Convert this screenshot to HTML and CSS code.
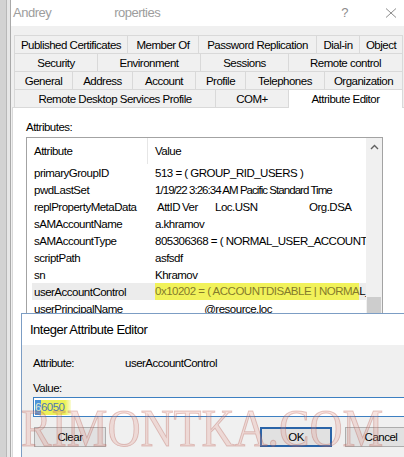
FILE: index.html
```html
<!DOCTYPE html>
<html>
<head>
<meta charset="utf-8">
<link rel="stylesheet" href="styles.css">
</head>
<body>
<div class="screen">
  <div class="strip"></div>
  <div class="window">
    <div class="titlebar">
      <span class="title">Andrey<span class="redact"> Khramov P</span>roperties</span>
      <span class="help">?</span>
      <span class="close"><svg width="12" height="10" viewBox="0 0 12 10"><path d="M1 0.5L11 9.5M11 0.5L1 9.5" stroke="#8c8c8c" stroke-width="1" fill="none"/></svg></span>
    </div>
    <div class="tabs">
      <div class="tabrow r1">
        <div class="tab">Published Certificates</div>
        <div class="tab">Member Of</div>
        <div class="tab">Password Replication</div>
        <div class="tab">Dial-in</div>
        <div class="tab">Object</div>
      </div>
      <div class="tabrow r2">
        <div class="tab">Security</div>
        <div class="tab">Environment</div>
        <div class="tab">Sessions</div>
        <div class="tab">Remote control</div>
      </div>
      <div class="tabrow r3">
        <div class="tab">General</div>
        <div class="tab">Address</div>
        <div class="tab">Account</div>
        <div class="tab">Profile</div>
        <div class="tab">Telephones</div>
        <div class="tab">Organization</div>
      </div>
      <div class="tabrow r4">
        <div class="tab">Remote Desktop Services Profile</div>
        <div class="tab">COM+</div>
        <div class="tab active">Attribute Editor</div>
      </div>
    </div>
    <div class="panel">
      <div class="label">Attributes:</div>
      <div class="listbox">
        <div class="list">
          <div class="head"><span class="hc1">Attribute</span><span class="hc2">Value</span></div>
          <div class="row"><span class="c1">primaryGroupID</span><span class="c2">513 = ( GROUP_RID_USERS )</span></div>
          <div class="row"><span class="c1">pwdLastSet</span><span class="c2 num">1/19/22 3:26:34 AM Pacific Standard Time</span></div>
          <div class="row"><span class="c1">replPropertyMetaData</span><span class="c2 meta"><span>AttID</span><span>Ver</span><span>Loc.USN</span><span>Org.DSA</span></span></div>
          <div class="row"><span class="c1">sAMAccountName</span><span class="c2">a.khramov</span></div>
          <div class="row"><span class="c1">sAMAccountType</span><span class="c2">805306368 = ( NORMAL_USER_ACCOUNT )</span></div>
          <div class="row"><span class="c1">scriptPath</span><span class="c2">asfsdf</span></div>
          <div class="row"><span class="c1">sn</span><span class="c2">Khramov</span></div>
          <div class="row selected"><span class="c1">userAccountControl</span><span class="c2"><span class="hl">0x10202 = ( ACCOUNTDISABLE | NORMA</span>L_ACCOUNT )</span></div>
          <div class="row"><span class="c1">userPrincipalName</span><span class="c2"><span class="redact">a.khramov</span>@resource.loc</span></div>
        </div>
        <div class="scrollbar">
          <div class="arrow"><svg width="9" height="6" viewBox="0 0 9 6"><path d="M1 5L4.5 1.5L8 5" stroke="#606060" stroke-width="1.4" fill="none"/></svg></div>
          <div class="thumb"></div>
        </div>
      </div>
    </div>
  </div>
</div>

<div class="dialog">
  <div class="dtitle">Integer Attribute Editor</div>
  <div class="dbody">
    <div class="drow"><span class="dlabel">Attribute:</span><span>userAccountControl</span></div>
    <div class="vlabel">Value:</div>
    <div class="input"><span class="sel1">6</span><span class="sel2">6050</span></div>
    <div class="btns">
      <div class="btn clear">Clear</div>
      <div class="btn ok">OK</div>
      <div class="btn">Cancel</div>
    </div>
  </div>
</div>

<div class="watermark">RIMONTKA.COM</div>
</body>
</html>
```

FILE: styles.css
```css
html, body {
  margin: 0;
  padding: 0;
}
body {
  width: 404px;
  height: 457px;
  overflow: hidden;
  position: relative;
  font-family: "Liberation Sans", Arial, sans-serif;
  font-size: 11.5px;
  letter-spacing: -0.5px;
  line-height: 14px;
  color: #000;
  background: #f0f0f0;
}
.screen {
  display: flex;
  height: 457px;
}
.strip {
  width: 10px;
  flex: none;
  background: linear-gradient(to right, #d2d2d2 0, #d2d2d2 6px, #b8b8b8 6px, #b8b8b8 7px, #e6e6e6 7px);
  border-right: 1px solid #a9a9a9;
}
.window {
  flex: 1;
  min-width: 0;
  display: flex;
  flex-direction: column;
  background: #f0f0f0;
}
.titlebar {
  height: 26px;
  flex: none;
  background: #fff;
  display: flex;
  align-items: center;
  padding-left: 2px;
  color: #9d9d9d;
  font-size: 13px;
}
.title {
  flex: 1;
  white-space: nowrap;
}
.redact {
  color: transparent;
}
.help {
  margin-right: 37px;
  color: #8c8c8c;
}
.close {
  display: flex;
  margin-right: 7px;
}
.tabs {
  padding: 9px 0 0 3px;
  flex: none;
}
.tabrow {
  display: flex;
  height: 18px;
}
.tab {
  box-sizing: border-box;
  height: 18px;
  flex: none;
  border-top: 1px solid #d9d9d9;
  border-left: 1px solid #d9d9d9;
  background: #f0f0f0;
  display: flex;
  align-items: center;
  justify-content: center;
  white-space: nowrap;
}
.tab:last-child {
  border-right: 1px solid #d9d9d9;
}
.tab.active {
  background: #fff;
  height: 19px;
  position: relative;
  z-index: 1;
}
.r1 .tab:nth-child(1) { width: 113px; }
.r1 .tab:nth-child(2) { width: 71px; }
.r1 .tab:nth-child(3) { width: 118px; }
.r1 .tab:nth-child(4) { width: 43px; }
.r1 .tab:nth-child(5) { width: 44px; }
.r2 .tab:nth-child(1) { width: 83px; }
.r2 .tab:nth-child(2) { width: 103px; }
.r2 .tab:nth-child(3) { width: 88px; }
.r2 .tab:nth-child(4) { width: 115px; }
.r3 .tab:nth-child(1) { width: 58px; }
.r3 .tab:nth-child(2) { width: 60px; }
.r3 .tab:nth-child(3) { width: 63px; }
.r3 .tab:nth-child(4) { width: 50px; }
.r3 .tab:nth-child(5) { width: 79px; }
.r3 .tab:nth-child(6) { width: 79px; }
.r4 .tab:nth-child(1) { width: 201px; }
.r4 .tab:nth-child(2) { width: 73px; }
.r4 .tab:nth-child(3) { width: 115px; }
.panel {
  flex: 1;
  margin-left: 1px;
  background: #fff;
  border-top: 1px solid #d9d9d9;
  border-left: 1px solid #d9d9d9;
  padding: 12px 0 0 13px;
}
.label {
  height: 14px;
}
.listbox {
  margin-top: 3px;
  box-sizing: border-box;
  width: 357px;
  height: 200px;
  border: 1px solid #a3a3a3;
  display: flex;
}
.list {
  flex: 1;
  min-width: 0;
  overflow: hidden;
}
.head {
  height: 26px;
  display: flex;
  margin-left: 5px;
}
.hc1 {
  box-sizing: border-box;
  width: 116px;
  padding-left: 2px;
  border-right: 1px solid #e6e6e6;
  display: flex;
  align-items: center;
}
.hc2 {
  padding-left: 7px;
  display: flex;
  align-items: center;
}
.row {
  height: 17px;
  display: flex;
  align-items: center;
  margin-left: 5px;
  white-space: nowrap;
}
.row.selected {
  background: #ececec;
}
.c1 {
  box-sizing: border-box;
  width: 116px;
  flex: none;
  padding-left: 2px;
}
.c2 {
  flex: 1;
  min-width: 0;
  overflow: hidden;
  padding-left: 7px;
}
.c2.num {
  letter-spacing: -0.95px;
}
.meta span {
  display: inline-block;
}
.meta span:nth-child(1) { width: 25px; margin-left: 2px; }
.meta span:nth-child(2) { width: 33px; }
.meta span:nth-child(3) { width: 94px; }
.hl {
  display: inline-block;
  line-height: 17px;
  background: #f1f25a;
  color: #857b2c;
}
.scrollbar {
  width: 16px;
  flex: none;
  background: #f0f0f0;
  display: flex;
  flex-direction: column;
}
.arrow {
  height: 18px;
  display: flex;
  align-items: center;
  justify-content: center;
}
.thumb {
  margin: 141px 1px 0;
  height: 17px;
  background: #cdcdcd;
}
.dialog {
  position: absolute;
  left: 21px;
  top: 313px;
  width: 420px;
  height: 160px;
  border: 1px solid #7c9dc4;
  background: #f0f0f0;
}
.dtitle {
  height: 31px;
  background: #fff;
  padding-left: 8px;
  display: flex;
  align-items: center;
  font-size: 13px;
}
.dbody {
  padding: 11px 0 0 11px;
}
.drow {
  display: flex;
}
.dlabel {
  width: 92px;
}
.vlabel {
  margin-top: 11px;
}
.input {
  margin-top: 2px;
  box-sizing: border-box;
  height: 20px;
  border: 1px solid #3d7fc1;
  background: #fff;
  padding-left: 1px;
  display: flex;
  align-items: center;
}
.sel1 {
  background: #4b93d8;
  color: #dfe9d0;
  line-height: 15px;
}
.sel2 {
  background: linear-gradient(to right, #ecf158 0, #ecf158 80%, rgba(240,245,120,0.3) 100%);
  color: #4f78b0;
  line-height: 15px;
  padding-right: 6px;
}
.btns {
  margin-top: 10px;
  display: flex;
  gap: 13px;
  padding-left: 1px;
}
.btn {
  box-sizing: border-box;
  width: 72px;
  height: 20px;
  background: #e1e1e1;
  border: 1px solid #adadad;
  display: flex;
  align-items: center;
  justify-content: center;
}
.btn.clear {
  margin-right: 141px;
}
.btn.ok {
  border: 2px solid #2a64a8;
}
.watermark {
  position: absolute;
  left: 21px;
  top: 403px;
  font-family: "Liberation Serif", "Times New Roman", serif;
  font-size: 52px;
  line-height: 52px;
  letter-spacing: 0;
  white-space: nowrap;
  color: rgba(228, 150, 140, 0.26);
  -webkit-text-stroke: 1px rgba(175, 80, 70, 0.3);
  transform: scaleX(0.88);
  transform-origin: left top;
  pointer-events: none;
}
```
